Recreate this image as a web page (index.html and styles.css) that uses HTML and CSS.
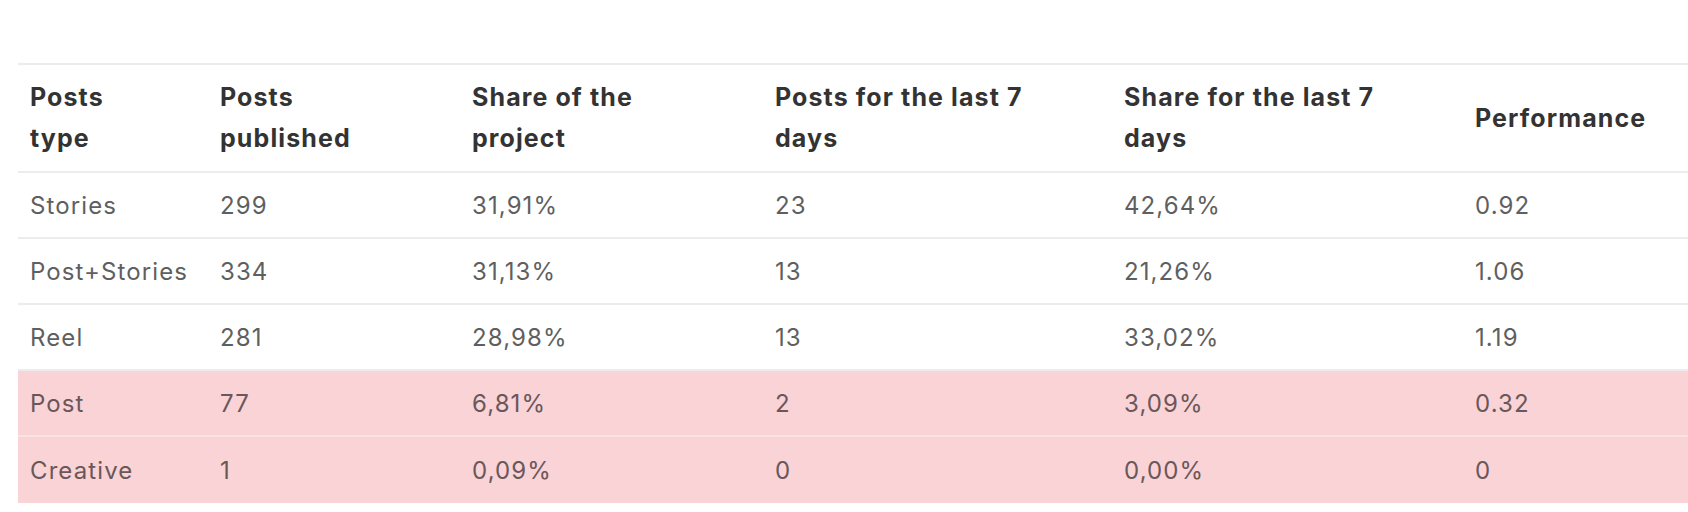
FILE: index.html
```html
<!DOCTYPE html>
<html lang="en">
<head>
<meta charset="utf-8">
<title>Posts types</title>
<link rel="stylesheet" href="styles.css">
</head>
<body>
<div class="wrap">
<table class="stats">
  <colgroup>
    <col class="c1"><col class="c2"><col class="c3"><col class="c4"><col class="c5"><col class="c6">
  </colgroup>
  <thead>
    <tr>
      <th>Posts<br>type</th>
      <th>Posts<br>published</th>
      <th>Share of the<br>project</th>
      <th>Posts for the last 7<br>days</th>
      <th>Share for the last 7<br>days</th>
      <th>Performance</th>
    </tr>
  </thead>
  <tbody>
    <tr><td>Stories</td><td>299</td><td>31,91%</td><td>23</td><td>42,64%</td><td>0.92</td></tr>
    <tr><td>Post+Stories</td><td>334</td><td>31,13%</td><td>13</td><td>21,26%</td><td>1.06</td></tr>
    <tr><td>Reel</td><td>281</td><td>28,98%</td><td>13</td><td>33,02%</td><td>1.19</td></tr>
    <tr class="low"><td>Post</td><td>77</td><td>6,81%</td><td>2</td><td>3,09%</td><td>0.32</td></tr>
    <tr class="low last"><td>Creative</td><td>1</td><td>0,09%</td><td>0</td><td>0,00%</td><td>0</td></tr>
  </tbody>
</table>
</div>
</body>
</html>
```
FILE: styles.css
```css
html, body {
  margin: 0;
  padding: 0;
  background: #ffffff;
  overflow: hidden;
}
.wrap {
  padding: 63px 0 0 18px;
}
.stats {
  border-collapse: separate;
  border-spacing: 0;
  width: 1670px;
  table-layout: fixed;
  font-family: Inter, Lato, "Liberation Sans", sans-serif;
  font-size: 24px;
  border-top: 2px solid #ececec;
}
.c1 { width: 190px; }
.c2 { width: 252px; }
.c3 { width: 303px; }
.c4 { width: 349px; }
.c5 { width: 351px; }
.c6 { width: 225px; }
.stats th,
.stats td {
  box-sizing: border-box;
  text-align: left;
  padding: 0 0 0 12px;
  vertical-align: middle;
  border-bottom: 2px solid #ececec;
  white-space: nowrap;
}
.stats th {
  height: 108px;
  font-size: 25px;
  font-weight: 700;
  color: #333333;
  line-height: 41px;
  letter-spacing: 1.1px;
}
.stats td {
  height: 66px;
  font-weight: 400;
  color: #5f5f5f;
  letter-spacing: 1.1px;
}
.stats tr.low td {
  background: #f9d3d6;
  color: #6a575a;
  border-bottom-color: #fbe3e5;
}
.stats tr.last td {
  border-bottom: 0;
}
```
